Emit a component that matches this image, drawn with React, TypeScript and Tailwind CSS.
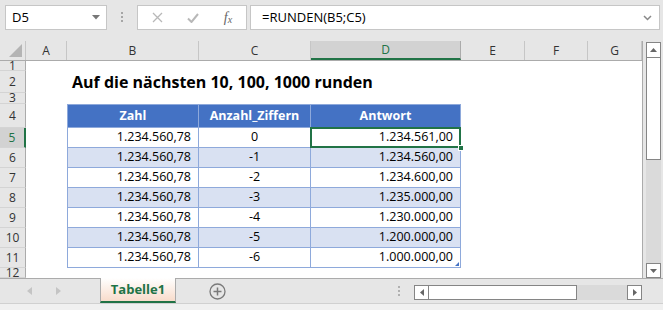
import React from 'react'

const font = "font-['Open_Sans',sans-serif]"

const cols = [
  { key: 'A', w: 'w-[41px]' },
  { key: 'B', w: 'w-[132px]' },
  { key: 'C', w: 'w-[112px]' },
  { key: 'D', w: 'w-[150px]' },
  { key: 'E', w: 'w-[64px]' },
  { key: 'F', w: 'w-[63px]' },
  { key: 'G', w: 'flex-1' },
]

const data: [number, string][] = [
  [0, '1.234.561,00'],
  [-1, '1.234.560,00'],
  [-2, '1.234.600,00'],
  [-3, '1.235.000,00'],
  [-4, '1.230.000,00'],
  [-5, '1.200.000,00'],
  [-6, '1.000.000,00'],
]

const cellBorder = 'border-r border-b border-[#8ea9db]'

function RowHead({ n, h, active }: { n: number; h: string; active?: boolean }) {
  return (
    <div
      className={`${h} w-[26px] shrink-0 flex items-center justify-center overflow-hidden text-[12px] leading-none border-b border-[#d4d4d4] ${
        active
          ? 'bg-[#d2d2d2] text-[#217346] border-r-2 border-r-[#217346]'
          : 'bg-[#e6e6e6] text-[#333] border-r border-r-[#ababab]'
      }`}
    >
      {n}
    </div>
  )
}

function Empty({ h }: { h: string }) {
  return <div className={`${h} flex-1 bg-white`} />
}

function TitleRow() {
  return (
    <div className="flex h-[22px]">
      <RowHead n={2} h="h-[22px]" />
      <div className="w-[41px] bg-white" />
      <div className="flex-1 bg-white flex items-center pl-[5px] whitespace-nowrap text-[16px] font-bold text-black">
        Auf die nächsten 10, 100, 1000 runden
      </div>
    </div>
  )
}

function HeadRow() {
  const th = `flex items-center justify-center text-white font-bold text-[12.5px] bg-[#4472c4] ${cellBorder} border-t`
  return (
    <div className="flex h-[24px]">
      <RowHead n={4} h="h-[24px]" />
      <div className="w-[41px] bg-white" />
      <div className={`w-[132px] border-l ${th}`}>Zahl</div>
      <div className={`w-[112px] ${th}`}>Anzahl_Ziffern</div>
      <div className={`w-[150px] ${th}`}>Antwort</div>
      <Empty h="h-[24px]" />
    </div>
  )
}

function DataRow({ i, digits, result }: { i: number; digits: number; result: string }) {
  const n = i + 5
  const bg = i % 2 === 1 ? 'bg-[#d9e1f2]' : 'bg-white'
  const td = `flex items-center text-[12.5px] text-black ${bg} ${cellBorder}`
  const last = i === data.length - 1
  return (
    <div className="flex h-[20px]">
      <RowHead n={n} h="h-[20px]" active={i === 0} />
      <div className="w-[41px] bg-white" />
      <div className={`w-[132px] border-l justify-end pr-[7px] ${td}`}>1.234.560,78</div>
      <div className={`w-[112px] justify-center ${td}`}>{digits}</div>
      <div className={`relative w-[150px] justify-end pr-[7px] ${td}`}>
        {result}
        {i === 0 && (
          <>
            <div className="absolute -top-[1px] -left-[1px] -right-[1px] -bottom-[1px] border-2 border-[#217346] z-10" />
            <div className="absolute -right-[4px] -bottom-[4px] w-[6px] h-[6px] bg-[#217346] border border-white z-20" />
          </>
        )}
        {last && (
          <div className="absolute right-[1px] bottom-[1px] w-0 h-0 border-l-[4px] border-l-transparent border-b-[4px] border-b-[#4472c4]" />
        )}
      </div>
      <Empty h="h-[20px]" />
    </div>
  )
}

function FormulaBar() {
  return (
    <div className="h-[41px] flex items-start text-[13px] text-black">
      <div className="ml-[5px] mt-[5px] w-[102px] h-[25px] bg-white border border-[#c6c6c6] flex items-center justify-between pl-[6px] pr-[6px]">
        <span>D5</span>
        <svg width="8" height="5" viewBox="0 0 8 5">
          <path d="M0 0h8L4 4.5z" fill="#777" />
        </svg>
      </div>
      <div className="ml-[14px] mt-[12px] flex flex-col gap-[2px]">
        <div className="w-[2px] h-[2px] bg-[#a6a6a6]" />
        <div className="w-[2px] h-[2px] bg-[#a6a6a6]" />
        <div className="w-[2px] h-[2px] bg-[#a6a6a6]" />
      </div>
      <div className="ml-[14px] mt-[5px] w-[110px] h-[25px] bg-white border border-[#c6c6c6] grid grid-cols-[38px_34px_36px] items-center">
        <div className="flex justify-center">
          <svg width="11" height="11" viewBox="0 0 11 11">
            <path d="M1 1L10 10M10 1L1 10" stroke="#b8b8b8" strokeWidth="1.3" />
          </svg>
        </div>
        <div className="flex justify-center">
          <svg width="12" height="10" viewBox="0 0 12 10">
            <path d="M1 5.5L4.5 9L11 1" stroke="#b8b8b8" strokeWidth="2" fill="none" />
          </svg>
        </div>
        <div className="flex justify-center font-['Liberation_Serif',serif] italic text-[#666] text-[14px] leading-none">
          <span>f</span>
          <span className="text-[10px] mt-[4px]">x</span>
        </div>
      </div>
      <div className="ml-[3px] mt-[5px] mr-[3px] flex-1 h-[25px] bg-white border border-[#c6c6c6] flex items-center justify-between pl-[11px] pr-[7px]">
        <span>=RUNDEN(B5;C5)</span>
        <svg width="9" height="6" viewBox="0 0 9 6">
          <path d="M1 1L4.5 4.5L8 1" stroke="#888" strokeWidth="1.5" fill="none" />
        </svg>
      </div>
    </div>
  )
}

function ColHeader() {
  return (
    <div className="flex h-[20px] bg-[#e6e6e6] border-b border-[#ababab] text-[12px] text-[#333]">
      <div className="relative w-[26px] border-r border-[#c6c6c6]">
        <div className="absolute right-[3px] bottom-[3px] w-0 h-0 border-l-[13px] border-l-transparent border-b-[13px] border-b-[#b4b4b4]" />
      </div>
      {cols.map((c) =>
        c.key === 'D' ? (
          <div
            key={c.key}
            className={`${c.w} flex items-center justify-center bg-[#d2d2d2] text-[#217346] border-b-2 border-[#217346] border-r border-r-[#ababab]`}
          >
            {c.key}
          </div>
        ) : (
          <div key={c.key} className={`${c.w} flex items-center justify-center border-r border-[#c6c6c6]`}>
            {c.key}
          </div>
        )
      )}
    </div>
  )
}

function VScroll() {
  return (
    <div className="w-[20px] flex flex-col pl-[3px] pr-[2px] pt-[1px] bg-[#e6e6e6]">
      <div className="h-[16px] bg-white border border-[#858585] flex items-center justify-center">
        <svg width="7" height="4" viewBox="0 0 7 4">
          <path d="M0 4L3.5 0L7 4z" fill="#666" />
        </svg>
      </div>
      <div className="h-[102px] bg-white border border-[#858585] border-t-0" />
      <div className="flex-1 bg-[#dadada]" />
      <div className="h-[15px] bg-white border border-[#858585] flex items-center justify-center">
        <svg width="7" height="4" viewBox="0 0 7 4">
          <path d="M0 0L3.5 4L7 0z" fill="#666" />
        </svg>
      </div>
    </div>
  )
}

function TabBar() {
  return (
    <div className="h-[25px] flex items-stretch bg-[#e6e6e6] border-t border-[#ababab]">
      <div className="w-[100px] flex items-center">
        <svg className="ml-[27px]" width="5" height="8" viewBox="0 0 5 8">
          <path d="M5 0L0 4L5 8z" fill="#c4c4c4" />
        </svg>
        <svg className="ml-[24px]" width="5" height="8" viewBox="0 0 5 8">
          <path d="M0 0L5 4L0 8z" fill="#c4c4c4" />
        </svg>
      </div>
      <div className="-mt-[1px] w-[76px] flex items-center justify-center border-l border-r border-[#ababab] border-b-2 border-b-[#217346] bg-gradient-to-b from-white to-[#f8dccb] text-[#217346] font-bold text-[13px]">
        Tabelle1
      </div>
      <div className="ml-[33px] flex items-center">
        <svg width="17" height="17" viewBox="0 0 17 17">
          <circle cx="8.5" cy="8.5" r="7.5" fill="none" stroke="#7a7a7a" strokeWidth="1.3" />
          <path d="M8.5 4.5v8M4.5 8.5h8" stroke="#7a7a7a" strokeWidth="1.5" />
        </svg>
      </div>
      <div className="ml-[172px] flex flex-col justify-center gap-[2px]">
        <div className="w-[2px] h-[2px] bg-[#b0b0b0]" />
        <div className="w-[2px] h-[2px] bg-[#b0b0b0]" />
        <div className="w-[2px] h-[2px] bg-[#b0b0b0]" />
      </div>
      <div className="ml-[14px] w-[228px] mt-[6px] h-[15px] flex">
        <div className="w-[15px] bg-white border border-[#858585] flex items-center justify-center">
          <svg width="4" height="7" viewBox="0 0 4 7">
            <path d="M4 0L0 3.5L4 7z" fill="#666" />
          </svg>
        </div>
        <div className="w-[148px] bg-white border border-[#858585] border-l-0" />
        <div className="flex-1 bg-[#dadada]" />
        <div className="w-[15px] bg-white border border-[#858585] flex items-center justify-center">
          <svg width="4" height="7" viewBox="0 0 4 7">
            <path d="M0 0L4 3.5L0 7z" fill="#666" />
          </svg>
        </div>
      </div>
    </div>
  )
}

export default function App() {
  return (
    <div className={`${font} w-[663px] h-[310px] bg-[#e6e6e6] flex flex-col overflow-hidden`}>
      <FormulaBar />
      <div className="flex h-[237px]">
        <div className="w-[643px] flex flex-col border-r border-[#ababab] overflow-hidden">
          <ColHeader />
          <div className="flex h-[10px]">
            <RowHead n={1} h="h-[10px]" />
            <Empty h="h-[10px]" />
          </div>
          <TitleRow />
          <div className="flex h-[11px]">
            <RowHead n={3} h="h-[11px]" />
            <Empty h="h-[11px]" />
          </div>
          <HeadRow />
          {data.map(([d, r], i) => (
            <DataRow key={i} i={i} digits={d} result={r} />
          ))}
          <div className="flex h-[10px]">
            <RowHead n={12} h="h-[10px]" />
            <Empty h="h-[10px]" />
          </div>
        </div>
        <VScroll />
      </div>
      <TabBar />
      <div className="flex-1 bg-[#f0f0f0] border-t border-[#d0d0d0]" />
    </div>
  )
}
